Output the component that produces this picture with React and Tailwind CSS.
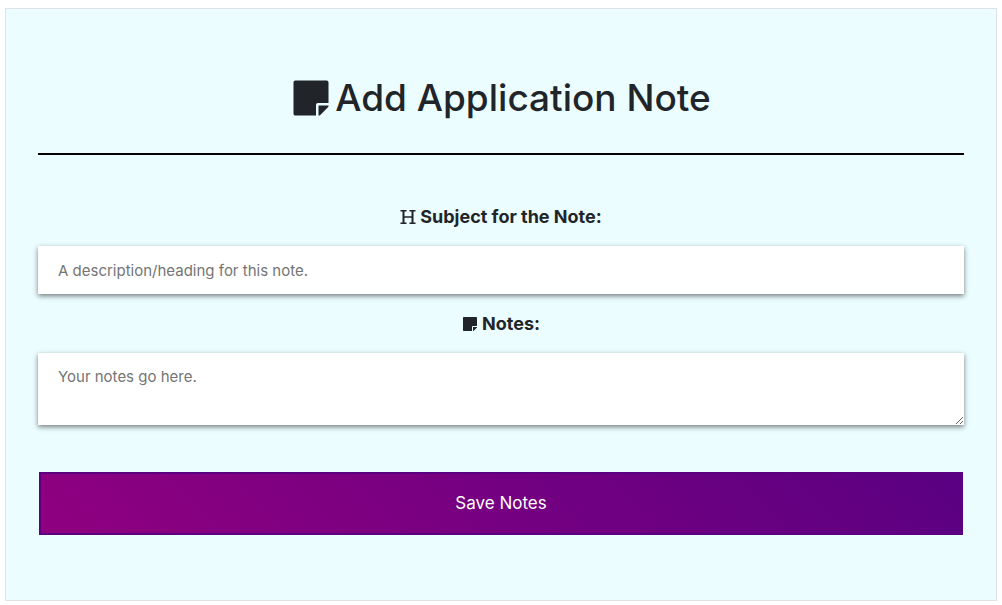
import { FaStickyNote } from "react-icons/fa";

const fieldClass =
  "block w-full bg-white px-5 text-[15px] text-[#212529] placeholder:text-[#757575] shadow-[0_2px_5px_0_rgba(0,0,0,0.5)] outline-none focus:ring-2 focus:ring-[#5a0080]";

const labelClass =
  "flex items-center justify-center gap-1 text-lg leading-7 font-bold";

function HeadingIcon() {
  return (
    <svg
      viewBox="0 0 16 16"
      className="size-4 shrink-0"
      fill="none"
      stroke="currentColor"
      aria-hidden="true"
    >
      <path d="M3.5 2v12M12.5 2v12" strokeWidth="2" />
      <path d="M3.5 8h9" strokeWidth="1.5" />
      <path d="M.5 1.75h6M9.5 1.75h6M.5 14.25h6M9.5 14.25h6" strokeWidth="1.5" />
    </svg>
  );
}

export default function App() {
  return (
    <main className="px-[5px] py-2 font-['Inter',sans-serif] text-[#212529]">
      <section className="border border-[#dee2e6] bg-[#ebfdfe] px-8 pt-16 pb-[65px]">
        <h1 className="flex items-center justify-center gap-1 text-[37px] leading-[50px] font-medium">
          <FaStickyNote className="size-10 shrink-0" aria-hidden="true" />
          Add Application Note
        </h1>
        <hr className="mt-[30px] border-t-2 border-black" />
        <form className="pt-12" onSubmit={(e) => e.preventDefault()}>
          <label htmlFor="subject" className={labelClass}>
            <HeadingIcon />
            Subject for the Note:
          </label>
          <input
            id="subject"
            type="text"
            placeholder="A description/heading for this note."
            className={`${fieldClass} mt-[15px] h-12`}
          />
          <label htmlFor="notes" className={`${labelClass} mt-4`}>
            <FaStickyNote className="size-4 shrink-0" aria-hidden="true" />
            Notes:
          </label>
          <textarea
            id="notes"
            rows={2}
            placeholder="Your notes go here."
            className={`${fieldClass} mt-[15px] min-h-[72px] resize-y py-3 leading-6`}
          />
          <div className="px-px pt-[47px]">
            <button
              type="submit"
              className="block h-[63px] w-full border-2 border-[#5a0080] bg-linear-45/srgb from-[#8f0080] to-[#5a0082] text-[17px] text-white"
            >
              Save Notes
            </button>
          </div>
        </form>
      </section>
    </main>
  );
}
